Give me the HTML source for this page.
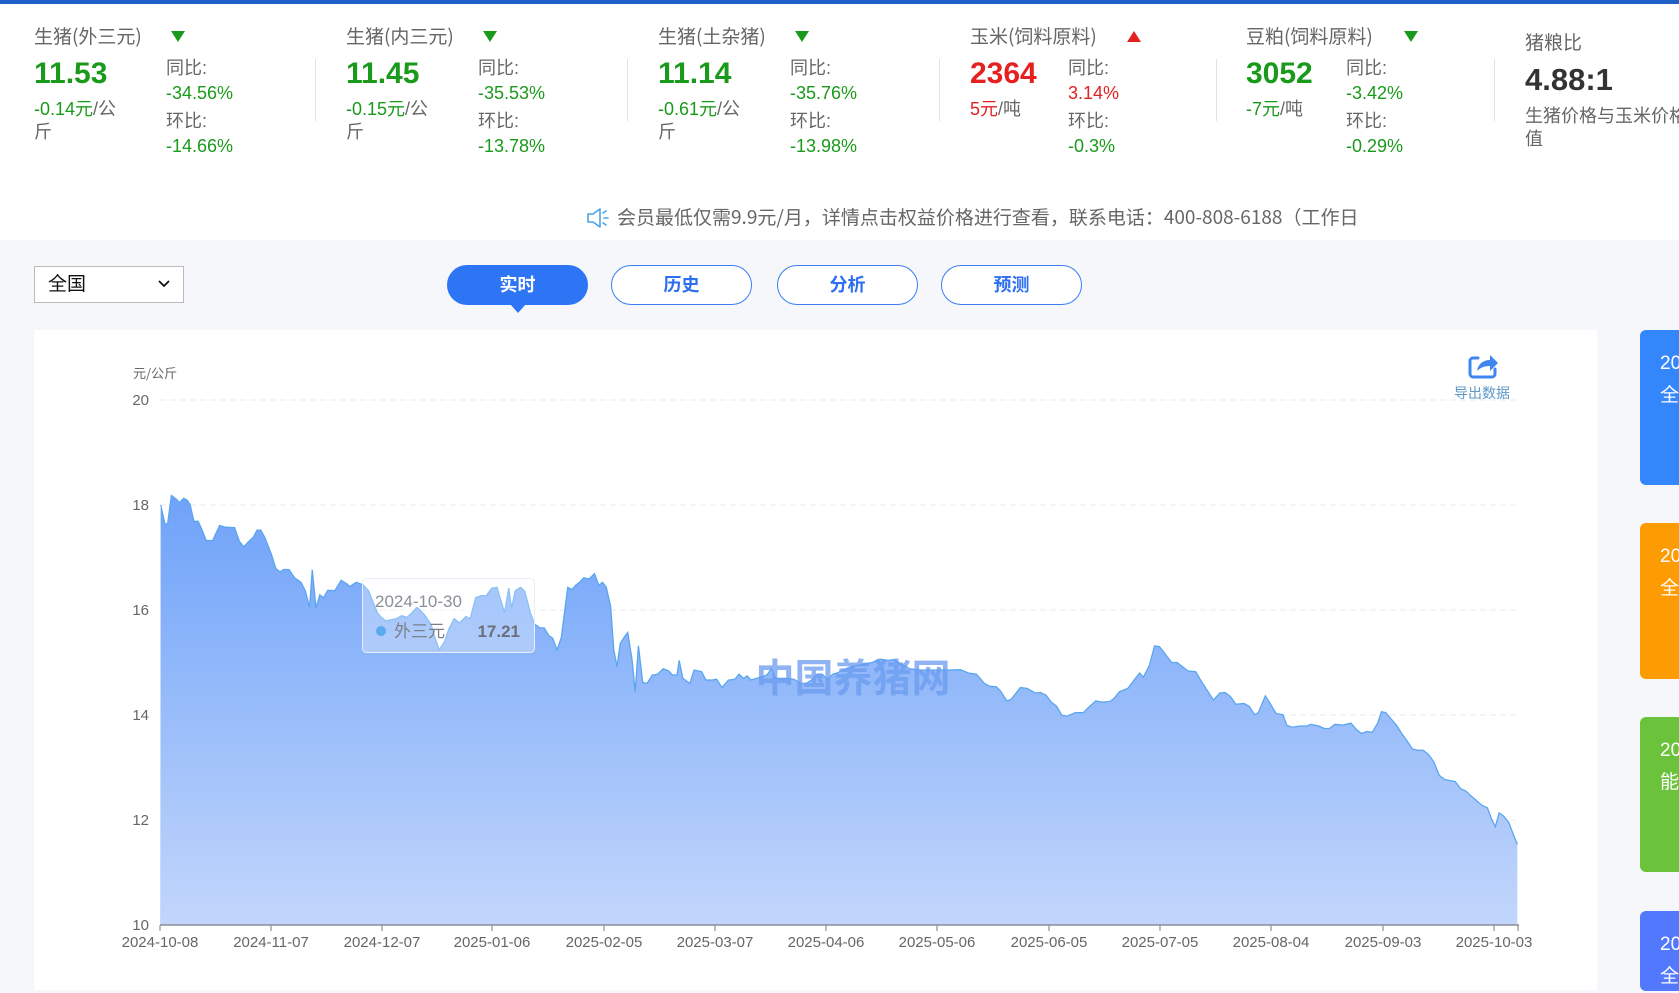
<!DOCTYPE html>
<html><head><meta charset="utf-8"><style>
*{margin:0;padding:0;box-sizing:border-box}
body{width:1679px;height:975px;overflow:hidden;background:#f5f7fa;font-family:"Liberation Sans","Noto Sans CJK SC",sans-serif;position:relative;color:#666}
.a{position:absolute;white-space:nowrap}
.top{position:absolute;left:0;top:0;width:1679px;height:240px;background:#fff;border-top:4px solid #1f5fc8}
.t{font-size:19px;color:#666;top:24px;line-height:24px;font-family:"Noto Sans CJK SC",sans-serif}
.tri{position:absolute;top:31px;width:0;height:0;border-left:7px solid transparent;border-right:7px solid transparent}
.dn{border-top:11px solid #1a9a1a}
.up{border-bottom:11px solid #e52020}
.n{font-size:30px;font-weight:bold;top:57px;line-height:34px}
.g{color:#1a9a1a}.r{color:#e52020}
.s{font-size:18px;line-height:23px;top:98px}
.c{font-size:18px;line-height:25px}
.dv{position:absolute;top:59px;width:1px;height:62px;background:#e3e3e3}
.btn{position:absolute;top:265px;width:141px;height:40px;border:1px solid #3a7df5;border-radius:20px;background:#fff;color:#2d6ff0;font-size:18px;font-weight:bold;text-align:center;line-height:38px}
.side{position:absolute;left:1640px;width:60px;border-radius:6px;color:#fff;font-size:19px;padding:18px 0 0 20px;line-height:32px}
</style></head><body>
<div class="top"></div>
<div class="a t" style="left:34px">生猪(外三元)</div><div class="tri dn" style="left:171px"></div>
<div class="a n g" style="left:34px">11.53</div>
<div class="a s" style="left:34px"><span class="g">-0.14元</span>/公<br>斤</div>
<div class="a c" style="left:166px;top:56px">同比:<br><span class="g">-34.56%</span></div>
<div class="a c" style="left:166px;top:109px">环比:<br><span class="g">-14.66%</span></div>
<div class="dv" style="left:315px"></div>
<div class="a t" style="left:346px">生猪(内三元)</div><div class="tri dn" style="left:483px"></div>
<div class="a n g" style="left:346px">11.45</div>
<div class="a s" style="left:346px"><span class="g">-0.15元</span>/公<br>斤</div>
<div class="a c" style="left:478px;top:56px">同比:<br><span class="g">-35.53%</span></div>
<div class="a c" style="left:478px;top:109px">环比:<br><span class="g">-13.78%</span></div>
<div class="dv" style="left:627px"></div>
<div class="a t" style="left:658px">生猪(土杂猪)</div><div class="tri dn" style="left:795px"></div>
<div class="a n g" style="left:658px">11.14</div>
<div class="a s" style="left:658px"><span class="g">-0.61元</span>/公<br>斤</div>
<div class="a c" style="left:790px;top:56px">同比:<br><span class="g">-35.76%</span></div>
<div class="a c" style="left:790px;top:109px">环比:<br><span class="g">-13.98%</span></div>
<div class="dv" style="left:939px"></div>
<div class="a t" style="left:970px">玉米(饲料原料)</div><div class="tri up" style="left:1127px"></div>
<div class="a n r" style="left:970px">2364</div>
<div class="a s" style="left:970px"><span class="r">5元</span>/吨</div>
<div class="a c" style="left:1068px;top:56px">同比:<br><span class="r">3.14%</span></div>
<div class="a c" style="left:1068px;top:109px">环比:<br><span class="g">-0.3%</span></div>
<div class="dv" style="left:1216px"></div>
<div class="a t" style="left:1246px">豆粕(饲料原料)</div><div class="tri dn" style="left:1404px"></div>
<div class="a n g" style="left:1246px">3052</div>
<div class="a s" style="left:1246px"><span class="g">-7元</span>/吨</div>
<div class="a c" style="left:1346px;top:56px">同比:<br><span class="g">-3.42%</span></div>
<div class="a c" style="left:1346px;top:109px">环比:<br><span class="g">-0.29%</span></div>
<div class="dv" style="left:1494px"></div>
<div class="a t" style="left:1525px;top:30px">猪粮比</div>
<div class="a" style="left:1525px;top:62px;font-size:31px;font-weight:bold;color:#333;line-height:36px">4.88:1</div>
<div class="a" style="left:1525px;top:104px;font-size:18px;line-height:23px;color:#666;font-family:'Noto Sans CJK SC',sans-serif">生猪价格与玉米价格比<br>值</div>
<svg class="a" style="left:586px;top:207px" width="24" height="22" viewBox="0 0 24 22"><path d="M2 7h5l7-5v18l-7-5H2z" fill="none" stroke="#4aa3e8" stroke-width="1.6" stroke-linejoin="round"/><path d="M17 6l3-2M18 11h4M17 16l3 2" stroke="#4aa3e8" stroke-width="1.6" stroke-linecap="round"/></svg>
<div class="a" style="left:617px;top:204px;font-size:19px;line-height:26px;color:#666;font-family:'Noto Sans CJK SC',sans-serif">会员最低仅需9.9元/月，详情点击权益价格进行查看，联系电话：400-808-6188（工作日</div>
<div class="a" style="left:34px;top:266px;width:150px;height:37px;border:1px solid #bbb;background:#fff;font-size:19px;color:#111;line-height:35px;padding-left:13px">全国</div>
<svg class="a" style="left:157px;top:279px" width="14" height="10"><path d="M2 2l5 5 5-5" fill="none" stroke="#111" stroke-width="1.8"/></svg>
<div class="btn" style="left:447px;background:#2e75f6;color:#fff;border-color:#2e75f6">实时</div>
<div class="a" style="left:510px;top:304px;width:0;height:0;border-left:8px solid transparent;border-right:8px solid transparent;border-top:9px solid #2e75f6"></div>
<div class="btn" style="left:611px">历史</div>
<div class="btn" style="left:777px">分析</div>
<div class="btn" style="left:941px">预测</div>
<div class="a" style="left:34px;top:330px;width:1563px;height:660px;background:#fff"></div>
<div class="side" style="top:330px;height:155px;background:#3486fb">20<br>全</div>
<div class="side" style="top:523px;height:156px;background:#fd9b02">20<br>全</div>
<div class="side" style="top:717px;height:155px;background:#6bc33b">20<br>能</div>
<div class="side" style="top:911px;height:80px;background:#5278fd">20<br>全</div>
<svg class="a" style="left:0;top:0" width="1679" height="975">
<defs><linearGradient id="gr" gradientUnits="userSpaceOnUse" x1="0" y1="420" x2="0" y2="1448"><stop offset="0" stop-color="#6ea2f9"/><stop offset="1" stop-color="#c2d6fb"/></linearGradient></defs>
<g stroke="#e4ebf5" stroke-dasharray="6,4" stroke-width="1">
<line x1="160" y1="400" x2="1518" y2="400"/><line x1="160" y1="505" x2="1518" y2="505"/><line x1="160" y1="610" x2="1518" y2="610"/><line x1="160" y1="715" x2="1518" y2="715"/><line x1="160" y1="820" x2="1518" y2="820"/>
</g>
<g transform="translate(0,320) scale(0.5356,0.4177)">
<path id="p1" fill="url(#gr)" d="M300,1448 L300,443 L308,488 L313,488 L320,420 L330,430 L335,437 L343,427 L350,432 L355,442 L362,482 L370,482 L377,502 L385,528 L397,528 L410,492 L420,496 L438,497 L447,530 L455,543 L463,532 L473,520 L480,503 L487,503 L495,522 L507,562 L515,595 L523,603 L530,597 L540,598 L550,617 L562,628 L570,648 L578,688 L583,598 L590,690 L597,658 L604,665 L612,647 L625,648 L637,623 L648,632 L653,638 L665,628 L678,634 L688,648 L698,680 L705,702 L712,712 L720,720 L730,718 L740,715 L750,708 L760,712 L770,700 L778,688 L785,695 L795,710 L805,730 L812,760 L820,790 L830,770 L838,740 L848,715 L858,725 L870,710 L878,715 L888,665 L898,660 L908,660 L918,642 L928,640 L936,675 L942,700 L950,642 L955,690 L962,648 L972,640 L980,650 L990,700 L998,728 L1008,737 L1016,737 L1025,756 L1032,762 L1040,790 L1048,760 L1060,640 L1068,645 L1075,635 L1082,628 L1090,617 L1100,620 L1110,607 L1118,635 L1125,628 L1132,640 L1140,685 L1146,790 L1152,830 L1158,775 L1165,760 L1172,748 L1180,812 L1186,890 L1192,780 L1200,868 L1208,870 L1218,850 L1228,848 L1238,835 L1248,840 L1256,850 L1264,850 L1268,815 L1275,858 L1288,870 L1296,838 L1310,842 L1318,862 L1330,862 L1338,860 L1348,880 L1360,862 L1372,860 L1380,848 L1388,858 L1395,852 L1402,862 L1420,855 L1432,850 L1440,835 L1448,858 L1470,858 L1482,860 L1495,870 L1505,870 L1515,862 L1525,848 L1535,848 L1545,860 L1555,848 L1570,842 L1570,1448 Z"/>
<path fill="none" stroke="#5aa6ee" stroke-width="1.3" vector-effect="non-scaling-stroke" d="M300,443 L308,488 L313,488 L320,420 L330,430 L335,437 L343,427 L350,432 L355,442 L362,482 L370,482 L377,502 L385,528 L397,528 L410,492 L420,496 L438,497 L447,530 L455,543 L463,532 L473,520 L480,503 L487,503 L495,522 L507,562 L515,595 L523,603 L530,597 L540,598 L550,617 L562,628 L570,648 L578,688 L583,598 L590,690 L597,658 L604,665 L612,647 L625,648 L637,623 L648,632 L653,638 L665,628 L678,634 L688,648 L698,680 L705,702 L712,712 L720,720 L730,718 L740,715 L750,708 L760,712 L770,700 L778,688 L785,695 L795,710 L805,730 L812,760 L820,790 L830,770 L838,740 L848,715 L858,725 L870,710 L878,715 L888,665 L898,660 L908,660 L918,642 L928,640 L936,675 L942,700 L950,642 L955,690 L962,648 L972,640 L980,650 L990,700 L998,728 L1008,737 L1016,737 L1025,756 L1032,762 L1040,790 L1048,760 L1060,640 L1068,645 L1075,635 L1082,628 L1090,617 L1100,620 L1110,607 L1118,635 L1125,628 L1132,640 L1140,685 L1146,790 L1152,830 L1158,775 L1165,760 L1172,748 L1180,812 L1186,890 L1192,780 L1200,868 L1208,870 L1218,850 L1228,848 L1238,835 L1248,840 L1256,850 L1264,850 L1268,815 L1275,858 L1288,870 L1296,838 L1310,842 L1318,862 L1330,862 L1338,860 L1348,880 L1360,862 L1372,860 L1380,848 L1388,858 L1395,852 L1402,862 L1420,855 L1432,850 L1440,835 L1448,858 L1470,858 L1482,860 L1495,870 L1505,870 L1515,862 L1525,848 L1535,848 L1545,860 L1555,848 L1570,842"/>
</g>
<g transform="translate(840,320) scale(0.535,0.4177)">
<path fill="url(#gr)" d="M-2,1448 L-2,842 L20,830 L40,825 L60,820 L75,812 L90,815 L100,813 L110,820 L130,835 L150,838 L175,838 L200,838 L225,837 L240,845 L255,848 L270,870 L280,877 L292,878 L300,888 L312,912 L320,908 L337,880 L350,882 L365,893 L375,892 L385,898 L395,915 L405,925 L415,947 L425,948 L440,940 L455,940 L465,927 L478,912 L490,915 L505,913 L513,905 L522,890 L538,882 L548,865 L560,845 L567,855 L578,828 L588,780 L597,782 L605,795 L620,820 L630,820 L640,830 L650,840 L665,842 L673,860 L688,890 L698,910 L710,893 L720,892 L730,902 L740,920 L755,918 L765,925 L775,945 L782,940 L795,900 L805,920 L815,942 L828,945 L835,970 L845,975 L860,972 L873,972 L880,968 L895,972 L905,978 L915,978 L925,968 L940,970 L955,965 L965,980 L975,990 L985,985 L995,987 L1005,965 L1012,938 L1020,940 L1030,955 L1040,970 L1050,990 L1060,1008 L1070,1027 L1080,1030 L1090,1030 L1100,1040 L1110,1058 L1120,1090 L1130,1100 L1150,1105 L1160,1122 L1170,1128 L1180,1140 L1192,1153 L1200,1162 L1210,1168 L1218,1195 L1225,1213 L1232,1180 L1240,1187 L1250,1203 L1258,1230 L1266,1255 L1266,1448 Z"/>
<path fill="none" stroke="#5aa6ee" stroke-width="1.3" vector-effect="non-scaling-stroke" d="M-2,842 L20,830 L40,825 L60,820 L75,812 L90,815 L100,813 L110,820 L130,835 L150,838 L175,838 L200,838 L225,837 L240,845 L255,848 L270,870 L280,877 L292,878 L300,888 L312,912 L320,908 L337,880 L350,882 L365,893 L375,892 L385,898 L395,915 L405,925 L415,947 L425,948 L440,940 L455,940 L465,927 L478,912 L490,915 L505,913 L513,905 L522,890 L538,882 L548,865 L560,845 L567,855 L578,828 L588,780 L597,782 L605,795 L620,820 L630,820 L640,830 L650,840 L665,842 L673,860 L688,890 L698,910 L710,893 L720,892 L730,902 L740,920 L755,918 L765,925 L775,945 L782,940 L795,900 L805,920 L815,942 L828,945 L835,970 L845,975 L860,972 L873,972 L880,968 L895,972 L905,978 L915,978 L925,968 L940,970 L955,965 L965,980 L975,990 L985,985 L995,987 L1005,965 L1012,938 L1020,940 L1030,955 L1040,970 L1050,990 L1060,1008 L1070,1027 L1080,1030 L1090,1030 L1100,1040 L1110,1058 L1120,1090 L1130,1100 L1150,1105 L1160,1122 L1170,1128 L1180,1140 L1192,1153 L1200,1162 L1210,1168 L1218,1195 L1225,1213 L1232,1180 L1240,1187 L1250,1203 L1258,1230 L1266,1255"/>
</g>
<line x1="160.5" y1="506" x2="160.5" y2="925" stroke="#c8dcfb" stroke-width="1"/>
<line x1="160" y1="925" x2="1519" y2="925" stroke="#8a8f99" stroke-width="1.5"/>
<g stroke="#8a8f99" stroke-width="1.2">
<line x1="160" y1="925" x2="160" y2="931"/><line x1="271" y1="925" x2="271" y2="931"/><line x1="382" y1="925" x2="382" y2="931"/><line x1="492" y1="925" x2="492" y2="931"/><line x1="604" y1="925" x2="604" y2="931"/><line x1="715" y1="925" x2="715" y2="931"/><line x1="826" y1="925" x2="826" y2="931"/><line x1="937" y1="925" x2="937" y2="931"/><line x1="1049" y1="925" x2="1049" y2="931"/><line x1="1160" y1="925" x2="1160" y2="931"/><line x1="1271" y1="925" x2="1271" y2="931"/><line x1="1383" y1="925" x2="1383" y2="931"/><line x1="1494" y1="925" x2="1494" y2="931"/><line x1="1518" y1="925" x2="1518" y2="931"/>
</g>
<g font-family="Liberation Sans,sans-serif" font-size="15" fill="#666" text-anchor="end">
<text x="149" y="405">20</text><text x="149" y="510">18</text><text x="149" y="615">16</text><text x="149" y="720">14</text><text x="149" y="825">12</text><text x="149" y="930">10</text>
</g>
<text x="133" y="378" font-family="Noto Sans CJK SC,sans-serif" font-size="13" fill="#666">元/公斤</text>
<g font-family="Liberation Sans,sans-serif" font-size="15" fill="#666" text-anchor="middle">
<text x="160" y="947">2024-10-08</text><text x="271" y="947">2024-11-07</text><text x="382" y="947">2024-12-07</text><text x="492" y="947">2025-01-06</text><text x="604" y="947">2025-02-05</text><text x="715" y="947">2025-03-07</text><text x="826" y="947">2025-04-06</text><text x="937" y="947">2025-05-06</text><text x="1049" y="947">2025-06-05</text><text x="1160" y="947">2025-07-05</text><text x="1271" y="947">2025-08-04</text><text x="1383" y="947">2025-09-03</text><text x="1494" y="947">2025-10-03</text>
</g>
<text x="853" y="692" text-anchor="middle" font-family="Noto Sans CJK SC,sans-serif" font-weight="bold" font-size="39" fill="#6b9cf0" opacity="0.75">中国养猪网</text>
<rect x="362.5" y="578.5" width="172" height="74" rx="4" fill="#ffffff" fill-opacity="0.3" stroke="#e8eef8"/>
<text x="375" y="607" font-family="Liberation Sans,sans-serif" font-size="17" fill="#8a8f99">2024-10-30</text>
<circle cx="381" cy="631" r="5" fill="#5aaaf0"/>
<text x="394" y="637" font-family="Noto Sans CJK SC,sans-serif" font-size="17" fill="#7a7f88">外三元</text>
<text x="520" y="637" text-anchor="end" font-family="Liberation Sans,sans-serif" font-weight="bold" font-size="17" fill="#6a6f78">17.21</text>
<path d="M1478 358h-5a3 3 0 0 0-3 3v13a3 3 0 0 0 3 3h19a3 3 0 0 0 3-3v-5" fill="none" stroke="#3f86f0" stroke-width="3" stroke-linecap="round"/>
<path d="M1477 371c1-7 6-11 13-11v-5l8 8-8 8v-5c-6 0-10 2-13 5z" fill="#3f86f0"/>
<text x="1482" y="398" text-anchor="middle" font-family="Noto Sans CJK SC,sans-serif" font-size="14" fill="#5d98c8">导出数据</text>
</svg>
</body></html>
